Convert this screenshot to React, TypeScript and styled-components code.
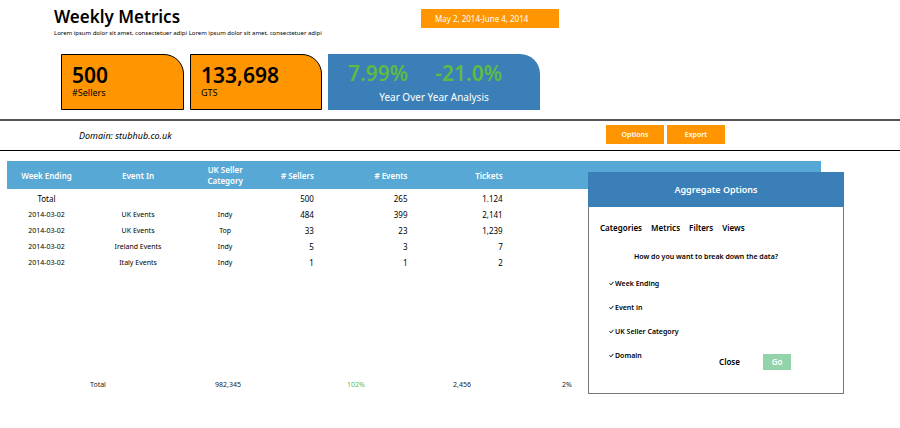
import React, { useState } from "react";
import styled, { createGlobalStyle } from "styled-components";

const orange = "#ff9500";
const blue = "#3a7fb7";
const sky = "#58a8d5";
const green = "#5dbb46";

const GlobalStyle = createGlobalStyle`
  * { box-sizing: border-box; }
  body {
    margin: 0;
    background: #fff;
    color: #000;
    font-family: "Noto Sans", "Open Sans", sans-serif;
    font-size: 8px;
    line-height: 12px;
  }
  button, input { font: inherit; color: inherit; }
`;

const Page = styled.div`
  min-height: 100vh;
`;

const Header = styled.header`
  padding: 7px 6% 9px;
  border-bottom: 2px solid #555;
`;

const TitleBar = styled.div`
  display: grid;
  grid-template-columns: 367px auto;
  align-items: start;
  margin-bottom: 15px;
`;

const Title = styled.h1`
  margin: 0;
  font-size: 17px;
  line-height: 20px;
  font-weight: 600;
`;

const Subtitle = styled.p`
  margin: 1px 0 0;
  font-size: 6px;
  line-height: 11px;
  white-space: nowrap;
`;

const DateRange = styled.button`
  justify-self: start;
  width: 138px;
  height: 19px;
  margin-top: 2px;
  padding: 0 14px;
  border: 0;
  background: ${orange};
  color: #fff;
  font-size: 8px;
  text-align: left;
`;

const Cards = styled.div`
  display: flex;
  gap: 6px;
  padding-left: 7px;
`;

const Card = styled.section<{ $width: number }>`
  width: ${(p) => p.$width}px;
  height: 56px;
  padding: 8px 10px;
  border: 1px solid #000;
  border-top-right-radius: 20px;
  background: ${orange};
`;

const CardValue = styled.div`
  font-size: 21px;
  line-height: 24px;
  font-weight: 600;
`;

const CardLabel = styled.div`
  font-size: 9px;
  line-height: 12px;
`;

const AnalysisCard = styled.section`
  width: 212px;
  height: 56px;
  padding: 7px 20px;
  border-top-right-radius: 20px;
  background: ${blue};
  color: #fff;
  text-align: center;
`;

const Changes = styled.div`
  display: flex;
  gap: 27px;
  color: ${green};
  font-size: 21px;
  line-height: 24px;
  font-weight: 600;
`;

const AnalysisLabel = styled.div`
  font-size: 10px;
  line-height: 24px;
`;

const DomainBar = styled.div`
  display: flex;
  justify-content: space-between;
  align-items: center;
  height: 30px;
  padding: 0 175px 0 79px;
  border-bottom: 1px solid #000;
`;

const Domain = styled.div`
  font-size: 9px;
  font-style: italic;
`;

const Actions = styled.div`
  display: flex;
  gap: 3px;
  margin-bottom: 2px;
`;

const ActionButton = styled.button`
  width: 58px;
  height: 19px;
  padding: 0;
  border: 0;
  background: ${orange};
  color: #fff;
  font-weight: 600;
  font-size: 7px;
`;

const Results = styled.main`
  position: relative;
  padding: 10px 0 24px;
`;

const MetricsTable = styled.table`
  width: calc(100% - 86px);
  margin-left: 7px;
  border-collapse: collapse;
  table-layout: fixed;
`;

const Column = styled.col<{ $share: string }>`
  width: ${(p) => p.$share};
`;

const HeadCell = styled.th<{ $numeric?: boolean }>`
  height: 28px;
  padding: 0;
  background: ${sky};
  color: #fff;
  font-size: 8px;
  line-height: 11px;
  font-weight: 600;
  text-align: ${(p) => (p.$numeric ? "right" : "center")};
`;

const Cell = styled.td<{ $numeric?: boolean; $large?: boolean }>`
  height: 16px;
  padding: 3px 0 0;
  font-size: ${(p) => (p.$numeric || p.$large ? 8 : 7)}px;
  text-align: ${(p) => (p.$numeric ? "right" : "center")};
`;

const Summary = styled.div`
  display: grid;
  grid-template-columns: 125px 132px 106px 109px auto;
  margin-top: 110px;
  padding-left: 10%;
  font-size: 7px;
`;

const SummaryItem = styled.span<{ $positive?: boolean }>`
  color: ${(p) => (p.$positive ? green : "#222")};
`;

const Panel = styled.section`
  position: absolute;
  top: 21px;
  right: 56px;
  width: 256px;
  border: 1px solid #777;
  border-top: 0;
  background: #fff;
  font-weight: 600;
`;

const PanelTitle = styled.h2`
  margin: 0 -1px;
  background: ${blue};
  color: #fff;
  font-size: 9px;
  line-height: 35px;
  font-weight: 600;
  text-align: center;
`;

const PanelBody = styled.div`
  padding: 15px 11px 23px;
`;

const Tabs = styled.nav`
  display: flex;
  gap: 9px;
  margin-bottom: 17px;
`;

const TextButton = styled.button`
  padding: 0;
  border: 0;
  background: none;
  font-size: 8px;
  line-height: 12px;
`;

const Breakdown = styled.fieldset`
  margin: 0;
  padding: 0 0 0 9px;
  border: 0;
  font-size: 7px;
`;

const Question = styled.legend`
  width: 100%;
  margin: 0 0 15px;
  padding-left: 25px;
`;

const Option = styled.label`
  display: flex;
  align-items: center;
  gap: 1px;
  height: 12px;
  margin-bottom: 12px;
  &:last-child { margin-bottom: 0; }
`;

const Tick = styled.input`
  appearance: none;
  width: 5px;
  height: 5px;
  margin: 0 0 2px;
  & + svg {
    width: 5px;
    height: 5px;
    margin: 0 0 2px -6px;
    visibility: hidden;
    pointer-events: none;
  }
  &:checked + svg { visibility: visible; }
`;

const PanelActions = styled.div`
  display: flex;
  justify-content: flex-end;
  align-items: center;
  gap: 23px;
  margin-top: -8px;
  padding-right: 41px;
`;

const GoButton = styled.button`
  width: 28px;
  height: 16px;
  padding: 0;
  border: 0;
  background: #92d3a9;
  color: #fff;
  font-weight: 600;
`;

const shares = ["9.7%", "12.8%", "8.6%", "6.6%", "11.5%", "11.7%", "39.1%"];

const rows = [
  ["Total", "", "", "500", "265", "1.124"],
  ["2014-03-02", "UK Events", "Indy", "484", "399", "2,141"],
  ["2014-03-02", "UK Events", "Top", "33", "23", "1,239"],
  ["2014-03-02", "Ireland Events", "Indy", "5", "3", "7"],
  ["2014-03-02", "Italy Events", "Indy", "1", "1", "2"],
];

const tabs = ["Categories", "Metrics", "Filters", "Views"];
const options = ["Week Ending", "Event in", "UK Seller Category", "Domain"];

function OptionsPanel({ onClose }: { onClose: () => void }) {
  return (
    <Panel aria-label="Aggregate Options">
      <PanelTitle>Aggregate Options</PanelTitle>
      <PanelBody>
        <Tabs>
          {tabs.map((tab) => (
            <TextButton key={tab}>{tab}</TextButton>
          ))}
        </Tabs>
        <Breakdown>
          <Question>How do you want to break down the data?</Question>
          {options.map((option) => (
            <Option key={option}>
              <Tick type="checkbox" defaultChecked />
              <svg viewBox="0 0 6 6" fill="none" stroke="#000" aria-hidden="true">
                <path d="M0.6 2.8 L2.3 4.6 L5.4 1" strokeWidth="1.2" />
              </svg>
              {option}
            </Option>
          ))}
        </Breakdown>
        <PanelActions>
          <TextButton onClick={onClose}>Close</TextButton>
          <GoButton>Go</GoButton>
        </PanelActions>
      </PanelBody>
    </Panel>
  );
}

export default function App() {
  const [open, setOpen] = useState(true);
  return (
    <Page>
      <GlobalStyle />
      <Header>
        <TitleBar>
          <div>
            <Title>Weekly Metrics</Title>
            <Subtitle>
              Lorem ipsum dolor sit amet, consectetuer adipi Lorem ipsum dolor sit amet, consectetuer adipi
            </Subtitle>
          </div>
          <DateRange>May 2, 2014-June 4, 2014</DateRange>
        </TitleBar>
        <Cards>
          <Card $width={123}>
            <CardValue>500</CardValue>
            <CardLabel>#Sellers</CardLabel>
          </Card>
          <Card $width={132}>
            <CardValue>133,698</CardValue>
            <CardLabel>GTS</CardLabel>
          </Card>
          <AnalysisCard>
            <Changes>
              <span>7.99%</span>
              <span>-21.0%</span>
            </Changes>
            <AnalysisLabel>Year Over Year Analysis</AnalysisLabel>
          </AnalysisCard>
        </Cards>
      </Header>
      <DomainBar>
        <Domain>Domain: stubhub.co.uk</Domain>
        <Actions>
          <ActionButton onClick={() => setOpen(true)}>Options</ActionButton>
          <ActionButton>Export</ActionButton>
        </Actions>
      </DomainBar>
      <Results>
        <MetricsTable>
          <colgroup>
            {shares.map((share, i) => (
              <Column key={i} $share={share} />
            ))}
          </colgroup>
          <thead>
            <tr>
              <HeadCell>Week Ending</HeadCell>
              <HeadCell>Event In</HeadCell>
              <HeadCell>UK Seller<br />Category</HeadCell>
              <HeadCell $numeric># Sellers</HeadCell>
              <HeadCell $numeric># Events</HeadCell>
              <HeadCell $numeric>Tickets</HeadCell>
              <HeadCell aria-hidden="true" />
            </tr>
          </thead>
          <tbody>
            {rows.map((row, r) => (
              <tr key={r}>
                {row.map((value, c) => (
                  <Cell key={c} $numeric={c > 2} $large={r === 0}>{value}</Cell>
                ))}
                <Cell />
              </tr>
            ))}
          </tbody>
        </MetricsTable>
        <Summary>
          <SummaryItem>Total</SummaryItem>
          <SummaryItem>982,345</SummaryItem>
          <SummaryItem $positive>102%</SummaryItem>
          <SummaryItem>2,456</SummaryItem>
          <SummaryItem>2%</SummaryItem>
        </Summary>
        {open && <OptionsPanel onClose={() => setOpen(false)} />}
      </Results>
    </Page>
  );
}
